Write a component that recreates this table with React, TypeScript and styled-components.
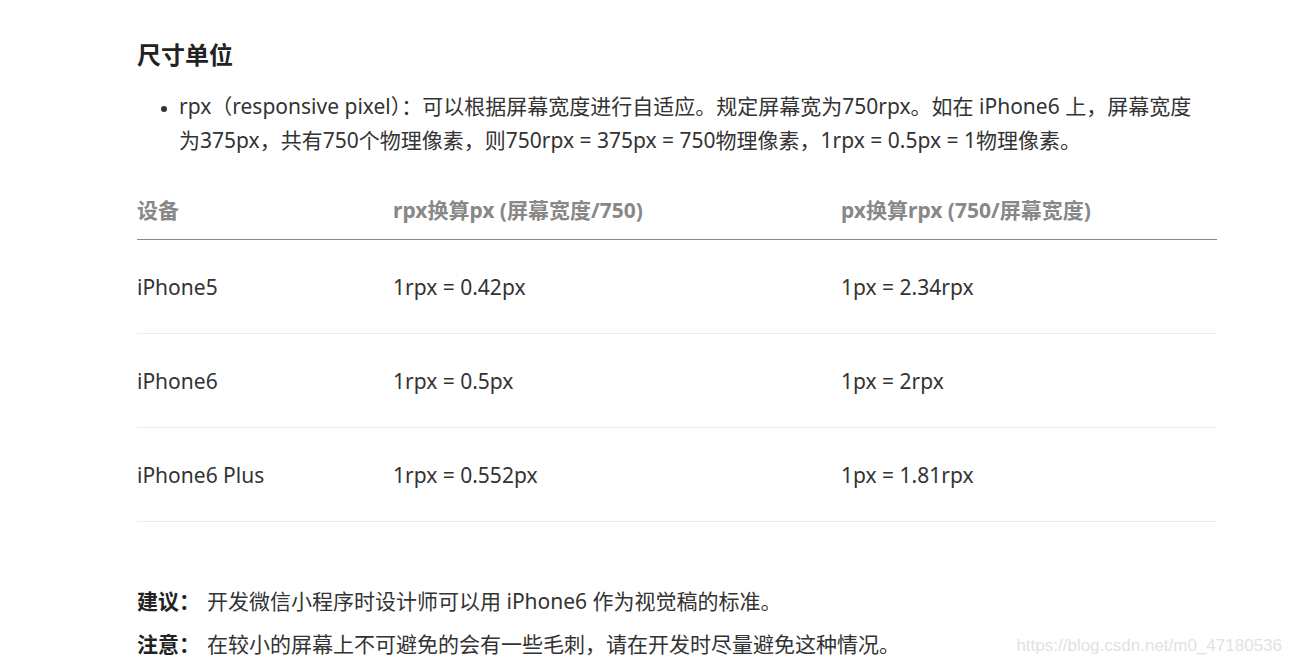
import React from "react";
import styled, { createGlobalStyle } from "styled-components";

const GlobalStyle = createGlobalStyle`
  html, body {
    margin: 0;
    padding: 0;
    background: #fff;
  }
  body {
    font-family: "Noto Sans", "Noto Sans CJK SC", sans-serif;
    color: #333;
  }
`;

const Page = styled.div`
  position: relative;
  width: 1290px;
  height: 664px;
  overflow: hidden;
  padding: 39px 0 0 137px;
  box-sizing: border-box;
`;

const Content = styled.section`
  width: 1080px;
`;

const Heading = styled.h2`
  margin: 0;
  font-size: 24px;
  line-height: 32px;
  font-weight: bold;
  color: #222;
`;

const List = styled.ul`
  margin: 18px 0 0 0;
  padding: 0 22px 0 42px;
  font-size: 21px;
  line-height: 34px;
`;

const Item = styled.li`
  &::marker {
    font-size: 16px;
  }
`;

const Table = styled.div`
  margin-top: 21px;
  display: grid;
  grid-template-columns: 256px 448px 376px;
  font-size: 21px;
`;

const Row = styled.div<{ $head?: boolean }>`
  display: contents;
  & > div {
    height: ${(p) => (p.$head ? "61px" : "93px")};
    border-bottom: 1px solid ${(p) => (p.$head ? "#888" : "#ececec")};
    color: ${(p) => (p.$head ? "#888" : "#333")};
    font-weight: ${(p) => (p.$head ? "bold" : "normal")};
  }
`;

const Cell = styled.div`
  display: flex;
  align-items: center;
`;

const Notes = styled.div`
  margin-top: 58px;
  font-size: 21px;
  line-height: 43px;
`;

const Note = styled.p`
  margin: 0;
  display: flex;
`;

const Label = styled.strong`
  width: 70px;
  flex-shrink: 0;
  color: #222;
`;

const Watermark = styled.span`
  position: absolute;
  right: 8px;
  bottom: 8px;
  font-family: "Liberation Sans", Arial, sans-serif;
  font-size: 17px;
  color: #e2e2e2;
`;

const rows = [
  ["iPhone5", "1rpx = 0.42px", "1px = 2.34rpx"],
  ["iPhone6", "1rpx = 0.5px", "1px = 2rpx"],
  ["iPhone6 Plus", "1rpx = 0.552px", "1px = 1.81rpx"],
];

export default function App() {
  return (
    <>
      <GlobalStyle />
      <Page>
        <Content>
          <Heading>尺寸单位</Heading>
          <List>
            <Item>
              rpx（responsive pixel）：可以根据屏幕宽度进行自适应。规定屏幕宽为750rpx。如在 iPhone6 上，屏幕宽度为375px，共有750个物理像素，则750rpx = 375px = 750物理像素，1rpx = 0.5px = 1物理像素。
            </Item>
          </List>
          <Table>
            <Row $head>
              <Cell>设备</Cell>
              <Cell>rpx换算px (屏幕宽度/750)</Cell>
              <Cell>px换算rpx (750/屏幕宽度)</Cell>
            </Row>
            {rows.map((r) => (
              <Row key={r[0]}>
                <Cell>{r[0]}</Cell>
                <Cell>{r[1]}</Cell>
                <Cell>{r[2]}</Cell>
              </Row>
            ))}
          </Table>
          <Notes>
            <Note>
              <Label>建议：</Label>
              开发微信小程序时设计师可以用 iPhone6 作为视觉稿的标准。
            </Note>
            <Note>
              <Label>注意：</Label>
              在较小的屏幕上不可避免的会有一些毛刺，请在开发时尽量避免这种情况。
            </Note>
          </Notes>
        </Content>
        <Watermark>https://blog.csdn.net/m0_47180536</Watermark>
      </Page>
    </>
  );
}
